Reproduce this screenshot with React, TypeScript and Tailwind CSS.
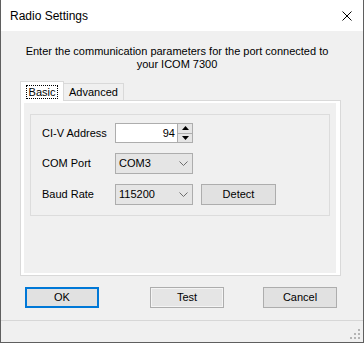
import { ReactNode } from 'react'

const font = { fontFamily: '"Liberation Sans", Arial, sans-serif' }

function Chevron() {
  return (
    <svg width="9" height="5" viewBox="0 0 9 5" className="shrink-0">
      <path d="M0.5 0.5 L4.5 4.5 L8.5 0.5" fill="none" stroke="#6d6d6d" strokeWidth="1" />
    </svg>
  )
}

function Combo({ value }: { value: string }) {
  return (
    <div className="w-[78px] h-[21px] bg-[#e5e5e5] border border-[#adadad] flex items-center justify-between pl-[3px] pr-[4px] text-[11px] text-black">
      <span>{value}</span>
      <Chevron />
    </div>
  )
}

function Spin() {
  return (
    <div className="w-[78px] h-[20px] bg-white border border-[#adadad] flex items-stretch">
      <div className="flex-1 text-right pr-[2px] text-[11px] leading-[18px] text-black">94</div>
      <div className="w-[15px] flex flex-col border-l border-[#adadad] bg-[#e5e5e5]">
        <div className="flex-1 flex items-center justify-center border-b border-[#adadad]">
          <svg width="7" height="4" viewBox="0 0 7 4"><path d="M3.5 0 L7 4 L0 4 Z" fill="#000" /></svg>
        </div>
        <div className="flex-1 flex items-center justify-center">
          <svg width="7" height="4" viewBox="0 0 7 4"><path d="M0 0 L7 0 L3.5 4 Z" fill="#000" /></svg>
        </div>
      </div>
    </div>
  )
}

function Button({ children, primary, hot, className = '' }: { children: ReactNode; primary?: boolean; hot?: boolean; className?: string }) {
  return (
    <div
      className={`h-[21px] w-[74px] flex items-center justify-center text-[11px] text-black ${
        primary
          ? 'border-2 border-[#0078d7] bg-[#e1e1e1]'
          : hot
            ? 'border border-[#adadad] bg-[#e5e5e5] shadow-[inset_0_0_0_1px_#f4f4f4]'
            : 'border border-[#adadad] bg-[#e1e1e1]'
      } ${className}`}
    >
      {children}
    </div>
  )
}

function Row({ label, children }: { label: string; children: ReactNode }) {
  return (
    <div className="flex items-center">
      <div className="w-[73px] text-[11px] text-black">{label}</div>
      {children}
    </div>
  )
}

export default function App() {
  return (
    <div style={font} className="w-[364px] h-[343px] flex flex-col border-x border-b border-[#5f5f5f] bg-[#f0f0f0] overflow-hidden">
      {/* Title bar */}
      <div className="h-[31px] shrink-0 bg-white flex items-center justify-between pl-[9px] pr-[11px]">
        <span className="text-[12px] text-black">Radio Settings</span>
        <svg width="10" height="10" viewBox="0 0 10 10">
          <path d="M0.5 0.5 L9.5 9.5 M9.5 0.5 L0.5 9.5" stroke="#000" strokeWidth="1" />
        </svg>
      </div>

      {/* Body */}
      <div className="flex-1 flex flex-col">
        <p className="mt-[14px] text-center text-[11px] leading-[13px] text-black pr-[10px]">
          Enter the communication parameters for the port connected to
          <br />
          your ICOM 7300
        </p>

        {/* Tabs */}
        <div className="mt-[9px] ml-[19px] w-[321px]">
          <div className="flex items-end h-[20px] relative z-10">
            <div className="h-[20px] w-[44px] bg-white border-x border-t border-[#d9d9d9] flex items-center justify-center -mb-px">
              <span className="text-[11px] text-black border border-dotted border-black px-[2px] leading-[12px]">Basic</span>
            </div>
            <div className="h-[17px] w-[60px] border-r border-t border-[#d9d9d9] flex items-center justify-center text-[11px] text-black">
              Advanced
            </div>
          </div>
          <div className="h-[176px] bg-white border border-[#d9d9d9] pt-[2px] pl-[3px] pr-[4px] pb-[2px] flex">
            <div className="flex-1 bg-[#f0f0f0] pt-[11px] px-[6px]">
              <div className="border border-[#dcdcdc] pl-[11px] pt-[8px] pb-[10px] flex flex-col gap-[10px]">
                <Row label="CI-V Address">
                  <Spin />
                </Row>
                <Row label="COM Port">
                  <Combo value="COM3" />
                </Row>
                <Row label="Baud Rate">
                  <Combo value="115200" />
                  <Button className="ml-[8px] w-[75px]">Detect</Button>
                </Row>
              </div>
            </div>
          </div>
        </div>

        {/* Buttons */}
        <div className="mt-[11px] flex items-center pl-[24px] pr-[26px] justify-between">
          <Button primary>OK</Button>
          <Button hot className="ml-[12px]">Test</Button>
          <Button>Cancel</Button>
        </div>

        {/* Status bar */}
        <div className="mt-auto h-[22px] border-t border-[#d7d7d7] flex items-end justify-end pr-[3px] pb-[3px]">
          <svg width="10" height="10" viewBox="0 0 10 10">
            <rect x="8" y="0" width="2" height="2" fill="#b4b4b4" />
            <rect x="4" y="4" width="2" height="2" fill="#b4b4b4" />
            <rect x="8" y="4" width="2" height="2" fill="#b4b4b4" />
            <rect x="0" y="8" width="2" height="2" fill="#b4b4b4" />
            <rect x="4" y="8" width="2" height="2" fill="#b4b4b4" />
            <rect x="8" y="8" width="2" height="2" fill="#b4b4b4" />
          </svg>
        </div>
      </div>
    </div>
  )
}
